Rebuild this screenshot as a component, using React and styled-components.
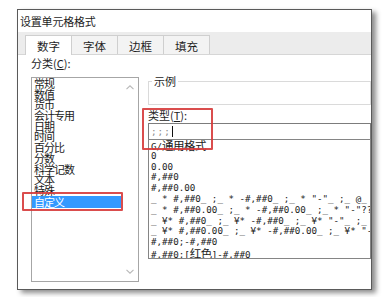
import React from "react";
import styled, { createGlobalStyle } from "styled-components";

const GlobalStyle = createGlobalStyle`
  html, body { margin: 0; padding: 0; background: #fff; }
  body {
    font-family: "Noto Sans CJK SC", "Liberation Sans", sans-serif;
    color: #1e1e1e;
  }
`;

const Page = styled.div`
  width: 385px;
  height: 297px;
  box-sizing: border-box;
  padding: 9px 0 0 17px;
  overflow: hidden;
`;

const Dialog = styled.div`
  position: relative;
  width: 355px;
  height: 281px;
  box-sizing: border-box;
  border: 1px solid #5a5a5a;
  background: #fff;
  box-shadow: 4px 3px 5px rgba(0, 0, 0, 0.45);
  display: flex;
  flex-direction: column;
  overflow: hidden;
`;

const TitleBar = styled.div`
  height: 22px;
  line-height: 22px;
  padding-left: 2px;
  font-size: 11px;
  letter-spacing: -0.2px;
`;

const TabStrip = styled.div`
  height: 23px;
  box-sizing: border-box;
  background: #ececec;
  border-bottom: 1px solid #d6d6d6;
  padding-left: 7px;
  display: flex;
  align-items: flex-end;
`;

const Tab = styled.div`
  width: 47px;
  height: ${(p) => (p.$active ? "20px" : "19px")};
  margin-bottom: ${(p) => (p.$active ? "-1px" : "0")};
  margin-left: -1px;
  box-sizing: border-box;
  border: 1px solid #cfcfcf;
  border-bottom: none;
  background: ${(p) => (p.$active ? "#fff" : "#f3f3f3")};
  padding-top: 3px;
  line-height: 15px;
  font-size: 11.5px;
  text-align: center;
  z-index: ${(p) => (p.$active ? 1 : 0)};
  &:first-child { margin-left: 0; }
`;

const Body = styled.div`
  flex: 1;
  display: flex;
  padding-left: 13px;
  min-height: 0;
`;

const LeftCol = styled.div`
  width: 108px;
  display: flex;
  flex-direction: column;
`;

const FieldLabel = styled.div`
  margin-top: ${(p) => p.$top || 0}px;
  margin-bottom: ${(p) => p.$bottom || 0}px;
  height: 13px;
  line-height: 13px;
  font-size: 11px;
  white-space: nowrap;
  u { text-decoration: underline; text-underline-offset: 1px; }
`;

const CategoryList = styled.div`
  width: 108px;
  height: 205px;
  box-sizing: border-box;
  border: 1px solid #a6a6a6;
  display: flex;
`;

const CategoryItems = styled.div`
  flex: 1;
  overflow: hidden;
`;

const CategoryItem = styled.div`
  height: ${(p) => (p.$selected ? "12px" : "10.7px")};
  line-height: ${(p) => (p.$selected ? "12px" : "10.7px")};
  padding-left: 2px;
  font-size: 11px;
  letter-spacing: -1px;
  white-space: nowrap;
  background: ${(p) => (p.$selected ? "#3399ff" : "transparent")};
  color: ${(p) => (p.$selected ? "#fff" : "#1a1a1a")};
`;

const ScrollTrack = styled.div`
  width: 17px;
  display: flex;
  flex-direction: column;
  justify-content: space-between;
  align-items: center;
  padding: 7px 0 7px;
`;

const RightCol = styled.div`
  flex: 1;
  margin-left: 9px;
  padding-top: 19px;
  display: flex;
  flex-direction: column;
  min-width: 0;
`;

const SampleGroup = styled.fieldset`
  margin: 0;
  padding: 0;
  min-width: 0;
  height: 31px;
  box-sizing: border-box;
  border: 1px solid #dadada;
`;

const SampleLegend = styled.legend`
  margin-left: 3px;
  padding: 0 2px;
  font-size: 11px;
  line-height: 14px;
`;

const TypeInput = styled.div`
  margin-top: 1px;
  height: 16px;
  box-sizing: border-box;
  border: 1px solid #7c7c7c;
  border-bottom: none;
  padding-left: 2px;
  font-family: "DejaVu Sans Mono", monospace;
  font-size: 9.3px;
  line-height: 15px;
  color: #8a8a8a;
  letter-spacing: 1px;
`;

const Caret = styled.span`
  display: inline-block;
  width: 1px;
  height: 11px;
  background: #111;
  vertical-align: -2px;
  margin-left: 1px;
`;

const FormatList = styled.div`
  height: 120px;
  box-sizing: border-box;
  border: 1px solid #858585;
  padding: 0 0 0 2px;
  overflow: hidden;
`;

const FormatItem = styled.div`
  height: 10.8px;
  line-height: 10.8px;
  font-family: "DejaVu Sans Mono", "Noto Sans CJK SC", monospace;
  font-size: 9.2px;
  color: #222;
  white-space: pre;
`;

const Cjk = styled.span`
  font-family: "Noto Sans CJK SC", sans-serif;
  font-size: 11.5px;
  line-height: 10.8px;
  letter-spacing: -0.5px;
`;

const RedBox = styled.div`
  position: absolute;
  left: ${(p) => p.$x}px;
  top: ${(p) => p.$y}px;
  width: ${(p) => p.$w}px;
  height: ${(p) => p.$h}px;
  box-sizing: border-box;
  border: 2px solid rgba(214, 58, 58, 0.9);
  border-radius: 1px;
  pointer-events: none;
`;

const Chevron = ({ down }) => (
  <svg width="8" height="5" viewBox="0 0 8 5">
    <polyline
      points={down ? "0.5,0.8 4,4.2 7.5,0.8" : "0.5,4.2 4,0.8 7.5,4.2"}
      fill="none"
      stroke="#b8b8b8"
      strokeWidth="1.1"
    />
  </svg>
);

const tabs = ["数字", "字体", "边框", "填充"];

const categories = [
  "常规",
  "数值",
  "货币",
  "会计专用",
  "日期",
  "时间",
  "百分比",
  "分数",
  "科学记数",
  "文本",
  "特殊",
  "自定义",
];

const formats = [
  ["G/", <Cjk key="c">通用格式</Cjk>],
  ["0"],
  ["0.00"],
  ["#,##0"],
  ["#,##0.00"],
  ['_ * #,##0_ ;_ * -#,##0_ ;_ * "-"_ ;_ @_ '],
  ['_ * #,##0.00_ ;_ * -#,##0.00_ ;_ * "-"??_ ;_ @_ '],
  ['_ ¥* #,##0_ ;_ ¥* -#,##0_ ;_ ¥* "-"_ ;_ @_ '],
  ['_ ¥* #,##0.00_ ;_ ¥* -#,##0.00_ ;_ ¥* "-"??_ ;_ @_ '],
  ["#,##0;-#,##0"],
  ["#,##0;[", <Cjk key="c">红色</Cjk>, "]-#,##0"],
];

export default function App() {
  return (
    <Page>
      <GlobalStyle />
      <Dialog>
        <TitleBar>设置单元格格式</TitleBar>
        <TabStrip>
          {tabs.map((t, i) => (
            <Tab key={t} $active={i === 0}>
              {t}
            </Tab>
          ))}
        </TabStrip>
        <Body>
          <LeftCol>
            <FieldLabel $top={2} $bottom={7}>
              分类(<u>C</u>):
            </FieldLabel>
            <CategoryList>
              <CategoryItems>
                {categories.map((c, i) => (
                  <CategoryItem key={c} $selected={i === categories.length - 1}>
                    {c}
                  </CategoryItem>
                ))}
              </CategoryItems>
              <ScrollTrack>
                <Chevron />
                <Chevron down />
              </ScrollTrack>
            </CategoryList>
          </LeftCol>
          <RightCol>
            <SampleGroup>
              <SampleLegend>示例</SampleLegend>
            </SampleGroup>
            <FieldLabel $top={4}>
              类型(<u>T</u>):
            </FieldLabel>
            <TypeInput>
              ;;;
              <Caret />
            </TypeInput>
            <FormatList>
              {formats.map((f, i) => (
                <FormatItem key={i}>{f}</FormatItem>
              ))}
            </FormatList>
          </RightCol>
        </Body>
        <RedBox $x={124} $y={98} $w={71} $h={42} />
        <RedBox $x={4} $y={182} $w={101} $h={19} />
      </Dialog>
    </Page>
  );
}
